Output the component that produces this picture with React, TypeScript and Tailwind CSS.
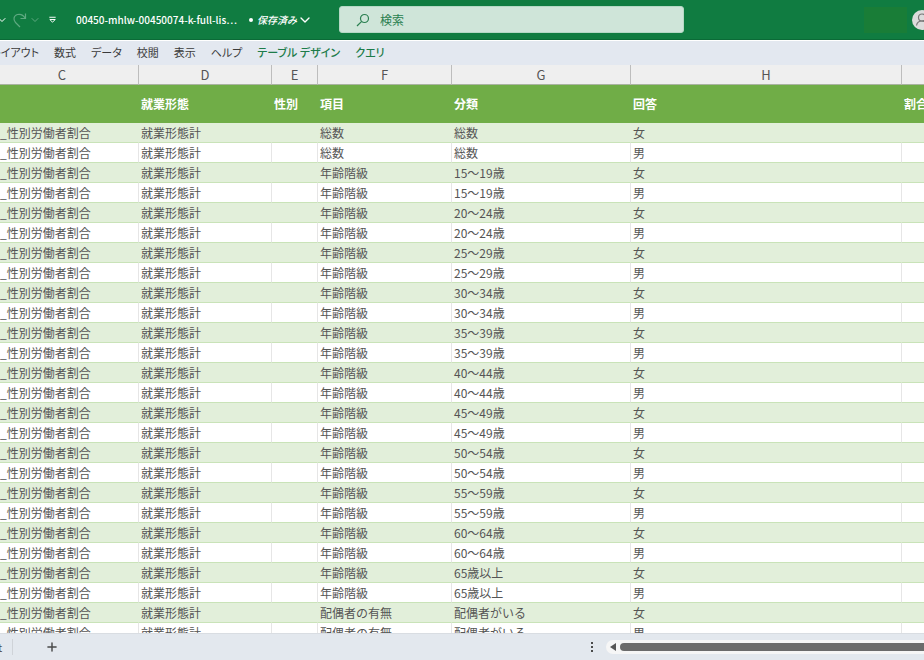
import { ChevronDown, Plus } from 'lucide-react'

const columns = [
  { letter: 'C', title: '', width: 'w-[139px]' },
  { letter: 'D', title: '就業形態', width: 'w-[133px]' },
  { letter: 'E', title: '性別', width: 'w-[46px]' },
  { letter: 'F', title: '項目', width: 'w-[134px]' },
  { letter: 'G', title: '分類', width: 'w-[179px]' },
  { letter: 'H', title: '回答', width: 'w-[271px]' },
  { letter: '', title: '割合', width: '' },
]

const groups = [
  ['総数', '総数'],
  ['年齢階級', '15～19歳'],
  ['年齢階級', '20～24歳'],
  ['年齢階級', '25～29歳'],
  ['年齢階級', '30～34歳'],
  ['年齢階級', '35～39歳'],
  ['年齢階級', '40～44歳'],
  ['年齢階級', '45～49歳'],
  ['年齢階級', '50～54歳'],
  ['年齢階級', '55～59歳'],
  ['年齢階級', '60～64歳'],
  ['年齢階級', '65歳以上'],
  ['配偶者の有無', '配偶者がいる'],
]

// every group has one row for women and one for men
const rows = groups.flatMap(([item, category]) =>
  ['女', '男'].map((answer) => ['_性別労働者割合', '就業形態計', '', item, category, answer, '']),
)

const tabs = ['レイアウト', '数式', 'データ', '校閲', '表示', 'ヘルプ']
const contextTabs = ['テーブル デザイン', 'クエリ']

function TitleBar() {
  return (
    <header className="grid h-10 shrink-0 grid-cols-[339px_1fr_240px] items-center overflow-hidden border-b border-[#0b6a37] bg-[#107c41] text-white">
      <div className="flex items-center overflow-hidden">
        <button type="button" aria-label="元に戻す" className="-ml-1 w-3">
          <ChevronDown className="size-3" />
        </button>
        <button type="button" aria-label="やり直し" className="ml-1 flex w-7 items-center gap-px text-[#5fa981]">
          <svg viewBox="0 0 16 16" className="size-4 shrink-0" fill="none" stroke="currentColor" strokeWidth="1.2">
            <path d="M13.5 1.5v5h-5M13.2 6.3C11.5 3.2 8.500 1.800 5.500 2.500C1.500 3.500 1 8 3.500 10.500L8 15" />
          </svg>
          <ChevronDown className="size-3 shrink-0" />
        </button>
        <button type="button" aria-label="クイック アクセスのユーザー設定" className="ml-2 w-3">
          <svg viewBox="0 0 10 10" className="size-[9px]" fill="none" stroke="currentColor" strokeWidth="1.1">
            <path d="M1.500 2.500h7M2 5h6L5 8z" />
          </svg>
        </button>
        <h1 className="ml-4 whitespace-nowrap text-[10px] font-medium">00450-mhlw-00450074-k-full-lis⋯</h1>
        <button type="button" className="ml-3 flex items-center gap-1 whitespace-nowrap text-[10px] font-medium">
          <span className="size-1 rounded-full bg-white" />
          <span className="italic">保存済み</span>
          <ChevronDown className="-ml-1 size-4" />
        </button>
      </div>

      <label className="flex h-[27px] items-center rounded-[3px] border border-[#b5d8c5] bg-[#cfe5d9] pl-4 text-[#2a7f50]">
        <svg viewBox="0 0 14 14" className="size-[14px]" fill="none" stroke="currentColor" strokeWidth="1.2">
          <circle cx="8.500" cy="5.500" r="4" />
          <path d="M5.700 8.300L1 13" />
        </svg>
        <input
          type="search"
          aria-label="検索"
          placeholder="検索"
          className="ml-2.5 min-w-0 flex-1 bg-transparent text-[12px] outline-none placeholder:text-[#2a7f50] placeholder:opacity-100"
        />
      </label>

      <div className="flex items-center justify-end gap-1 overflow-hidden">
        <div className="h-[26px] w-[43px] shrink-0 bg-[#197d37]" />
        <button type="button" aria-label="アカウント" className="-mr-2 ml-px size-5 shrink-0 rounded-full bg-[#dcdcdc] text-[#777777]">
          <svg viewBox="0 0 20 20" className="size-5" fill="none" stroke="currentColor" strokeWidth="1.2">
            <circle cx="10" cy="7.500" r="3.500" />
            <path d="M4.500 15.500c.5-3 2.500-4.500 5.500-4.500s5 1.500 5.500 4.500" />
          </svg>
        </button>
      </div>
    </header>
  )
}

function Ribbon() {
  return (
    <nav className="flex h-[25px] shrink-0 items-center gap-[15px] overflow-hidden border-t border-white bg-[#e3e8f0] pb-0.5 text-[11px] text-[#3b3b3b] [font-feature-settings:'palt']">
      {tabs.map((tab) => (
        <button key={tab} type="button" className="whitespace-nowrap first:-ml-[9px]">
          {tab}
        </button>
      ))}
      {contextTabs.map((tab) => (
        <button key={tab} type="button" className="whitespace-nowrap font-medium text-[#1d7c4a]">
          {tab}
        </button>
      ))}
    </nav>
  )
}

function Sheet() {
  return (
    <main className="min-h-0 flex-1 overflow-hidden">
      <table className="w-full table-fixed border-separate border-spacing-0 text-[12px] leading-4">
        <colgroup>
          {columns.map((col) => (
            <col key={col.title} className={col.width} />
          ))}
        </colgroup>
        <thead>
          <tr className="bg-[#efefef] text-[#555555]">
            {columns.map((col) => (
              <th
                key={col.title}
                className="h-5 border-r border-b border-r-[#bdbdbd] border-b-[#a9b3a0] p-0 text-center text-[13px] font-normal first:pr-3.5 last:border-r-0"
              >
                {col.letter}
              </th>
            ))}
          </tr>
          <tr className="bg-[#70ad47] text-white">
            {columns.map((col) => (
              <th key={col.title} className="h-[38px] p-0 pl-[2px] text-left font-bold whitespace-nowrap">
                {col.title}
              </th>
            ))}
          </tr>
        </thead>
        <tbody>
          {rows.map((row, i) => (
            <tr key={i} className="group text-[#555555] odd:bg-[#e2efda]">
              {row.map((cell, j) => (
                <td
                  key={j}
                  className="h-5 border-r border-b border-b-[#c9e3b8] p-0 pl-[2px] whitespace-nowrap first:pl-0 last:border-r-0 group-odd:border-r-transparent group-even:border-r-[#e6e6e6]"
                >
                  {cell}
                </td>
              ))}
            </tr>
          ))}
        </tbody>
      </table>
    </main>
  )
}

function SheetBar() {
  return (
    <footer className="flex h-[27px] shrink-0 items-center border-t border-[#d9dde2] bg-[#e3e8ee] text-[#4a4a4a]">
      <button type="button" className="flex h-4 w-[13px] items-center border-r border-[#cfd3d8] text-[11px]">
        <span className="-ml-0.5">t</span>
      </button>
      <button type="button" aria-label="新しいシート" className="ml-8">
        <Plus className="size-[14px]" strokeWidth={2.5} />
      </button>
      <div className="flex-1" />
      <div className="flex w-[336px] items-center">
        <svg viewBox="0 0 4 12" className="mr-3 ml-0.5 h-3 w-1" fill="currentColor">
          <rect x="1" y="1" width="2" height="2" />
          <rect x="1" y="5" width="2" height="2" />
          <rect x="1" y="9" width="2" height="2" />
        </svg>
        <div className="flex h-[14px] flex-1 items-center rounded-l-full bg-[#f6f6f6]">
          <button type="button" aria-label="左へスクロール" className="flex w-[14px] justify-center">
            <svg viewBox="0 0 6 8" className="h-2 w-[6px]" fill="#555555">
              <path d="M6 0v8L0 4z" />
            </svg>
          </button>
          <div className="h-2 flex-1 rounded-l-full bg-[#6b6b6b]" />
        </div>
      </div>
    </footer>
  )
}

export default function App() {
  return (
    <div className="flex h-screen flex-col overflow-hidden bg-white font-['Noto_Sans_CJK_JP',sans-serif]">
      <TitleBar />
      <Ribbon />
      <Sheet />
      <SheetBar />
    </div>
  )
}
